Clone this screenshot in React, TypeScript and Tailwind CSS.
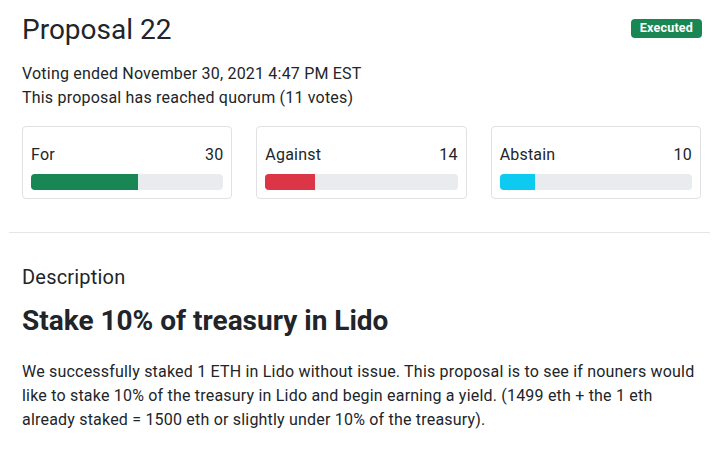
import React from "react";

const votes = [
  { label: "For", count: 30, bar: "bg-[#198754]" },
  { label: "Against", count: 14, bar: "bg-[#dc3545]" },
  { label: "Abstain", count: 10, bar: "bg-[#0dcaf0]" },
];

export default function App() {
  const total = votes.reduce((s, v) => s + v.count, 0);
  return (
    <div className="w-[719px] h-[458px] bg-white text-[#212529] font-['Roboto',sans-serif] tracking-[0.2px] overflow-hidden">
      <div className="px-[22px] pt-[14px]">
        <div className="flex items-start justify-between">
          <h1 className="text-[28px] leading-[32px] font-normal tracking-normal">Proposal 22</h1>
          <span className="mt-[5px] mr-[-5px] px-[9px] h-[19px] flex items-center rounded-[4px] bg-[#198754] text-white text-[12.5px] font-bold">
            Executed
          </span>
        </div>
        <div className="mt-[16px] text-[16px] leading-[24px]">
          <p>Voting ended November 30, 2021 4:47 PM EST</p>
          <p>This proposal has reached quorum (11 votes)</p>
        </div>
        <div className="mt-[16px] mr-[-4px] flex gap-[24px]">
          {votes.map((v) => (
            <div key={v.label} className="flex-1 h-[73px] border border-[#dfe1e4] rounded-[4px] px-[8px] pt-[16px]">
              <div className="flex justify-between text-[16px] leading-[24px]">
                <span>{v.label}</span>
                <span>{v.count}</span>
              </div>
              <div className="mt-[7px] h-[16px] rounded-[4px] bg-[#e9ecef] overflow-hidden flex">
                <div className={v.bar} style={{ width: `${(v.count / total) * 100}%` }} />
              </div>
            </div>
          ))}
        </div>
      </div>
      <div className="mx-[9px] mt-[33px] border-t border-[#e6e6e6]" />
      <div className="px-[22px] pt-[30px]">
        <h2 className="text-[20px] leading-[28px] font-normal">Description</h2>
        <h3 className="mt-[14px] text-[28px] leading-[32px] font-bold tracking-normal">Stake 10% of treasury in Lido</h3>
        <p className="mt-[23px] text-[16px] leading-[24px] w-[680px]">
          We successfully staked 1 ETH in Lido without issue. This proposal is to see if nouners would like to stake
          10% of the treasury in Lido and begin earning a yield. (1499 eth + the 1 eth already staked = 1500 eth or
          slightly under 10% of the treasury).
        </p>
      </div>
    </div>
  );
}
